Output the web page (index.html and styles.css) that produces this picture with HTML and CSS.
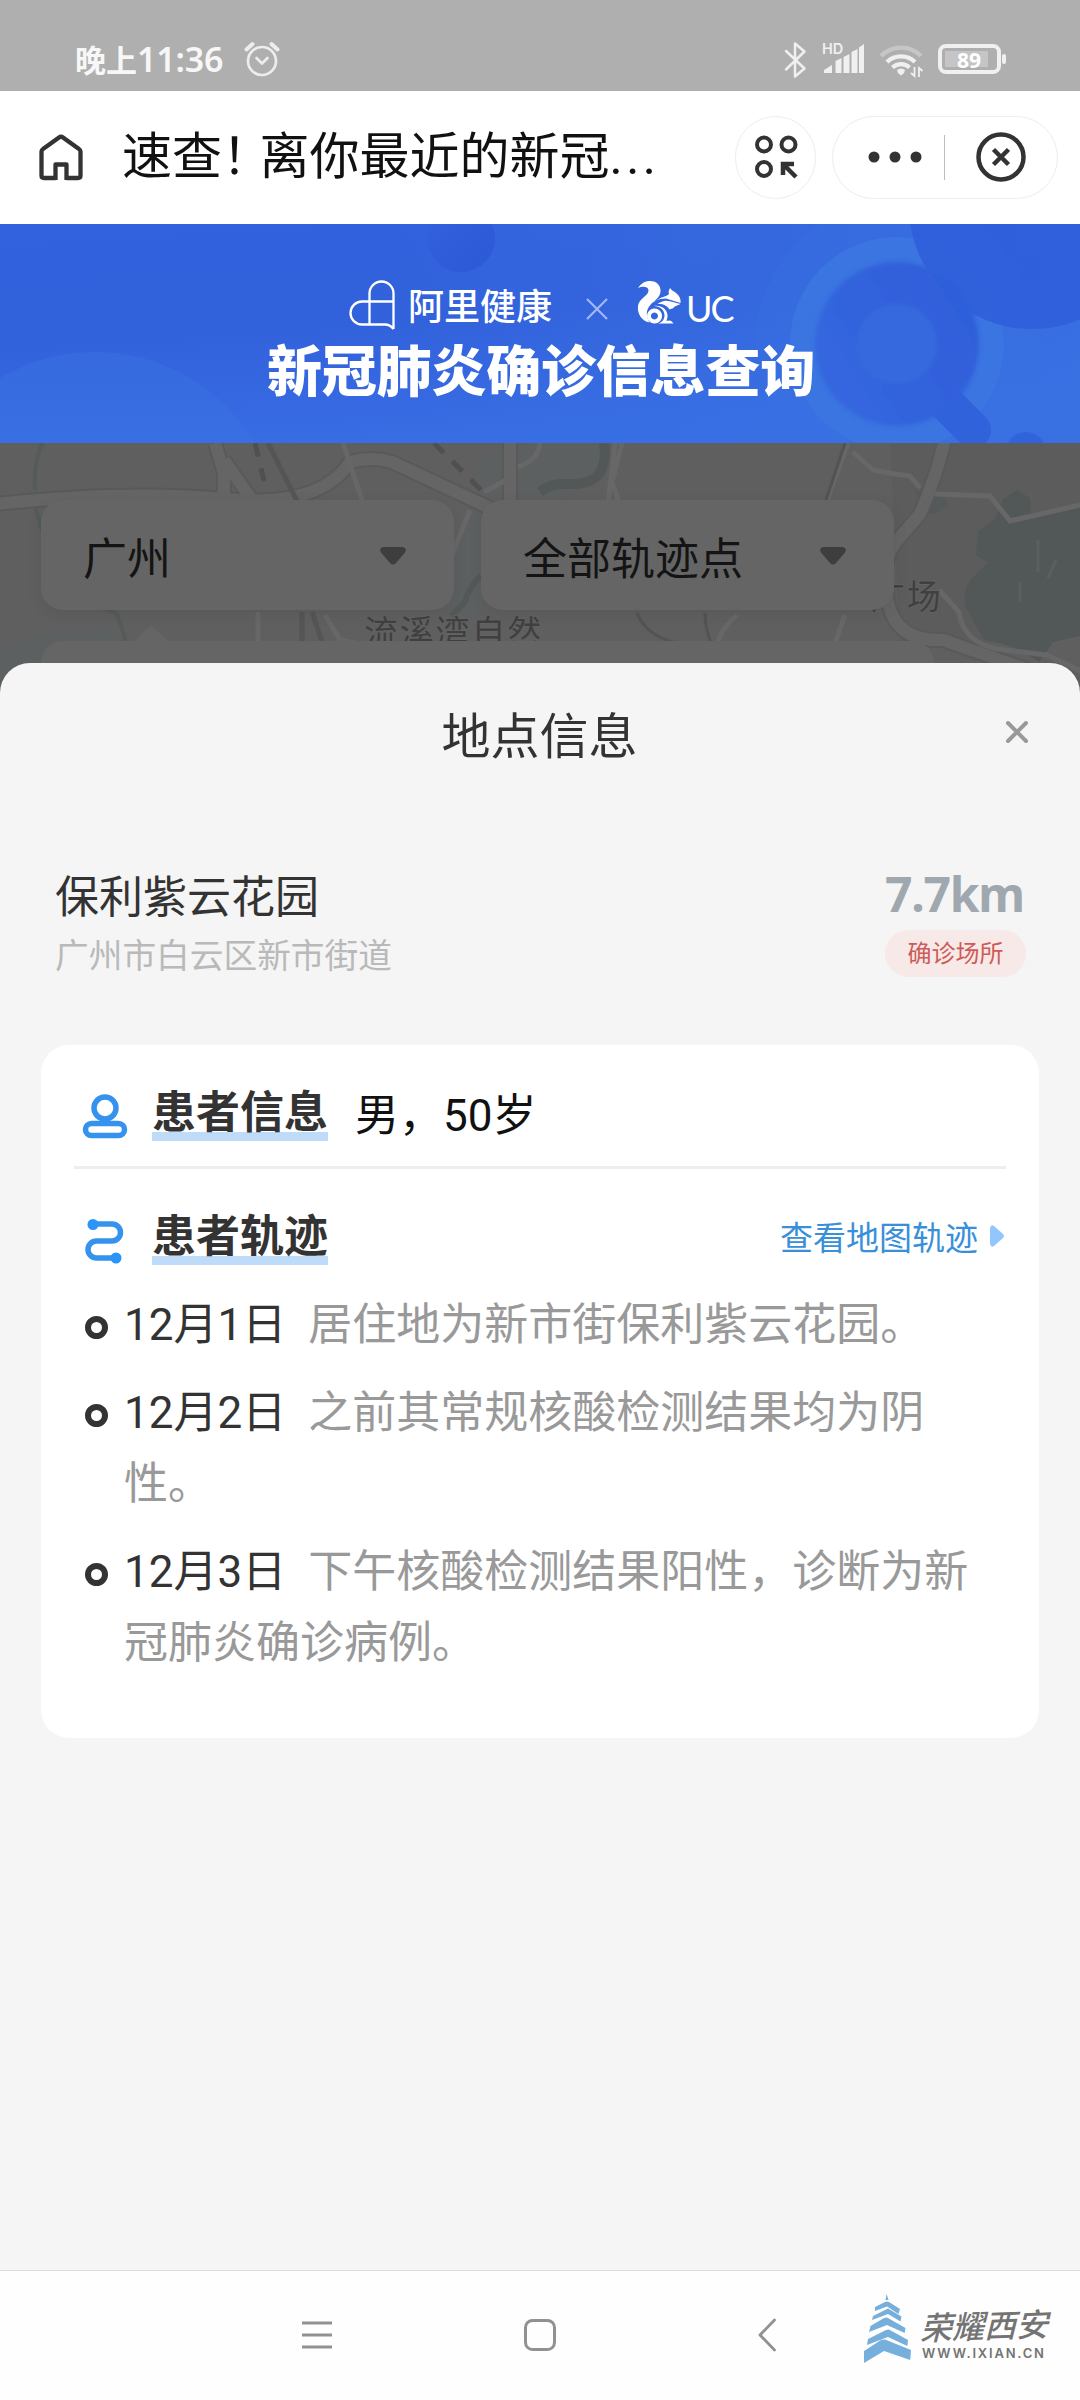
FILE: index.html
```html
<!DOCTYPE html>
<html lang="zh-CN">
<head>
<meta charset="utf-8">
<title>新冠肺炎确诊信息查询</title>
<link rel="stylesheet" href="styles.css">
</head>
<body>
<div class="status-bar">
  <div class="status-left">
    <span class="clock">晚上<b>11:36</b></span>
    <svg class="alarm" width="36" height="36" viewBox="0 0 36 36" fill="none" stroke="#ededed" stroke-width="2.7" stroke-linecap="round" stroke-linejoin="round"><circle cx="18" cy="20" r="14"/><path d="M12.500 17l5.500 5.500 5.500-5.500"/><path d="M2.500 8.500l6-5.500M33.500 8.500l-6-5.500" stroke-width="4"/></svg>
  </div>
  <svg class="status-icons" width="226" height="40" viewBox="784 39 226 40" fill="none" stroke="#f0f0f0">
    <path d="M786 51l18.500 17.500-9.500 8V43.500l9.500 8L786 69.500" stroke-width="2.500" stroke-linejoin="round" stroke-linecap="round"/>
    <text x="822" y="54" class="hd">HD</text>
    <path d="M824 73v-3l8-5v8zM835.500 73V61l6-3v15zM843.500 73V57l6-3v19zM851.500 73V52l6-3v24zM859 73V47.500l5-3.500v29z" fill="#f0f0f0" stroke="none"/>
    <g stroke-width="4.300"><path d="M881 56a28 28 0 0 1 40 0" stroke="#c6c6c6"/><path d="M887 62a20 20 0 0 1 28 0"/><path d="M892.500 67.500a12.500 12.500 0 0 1 17 0"/></g>
    <path d="M897 70q4-3 8 0l-1 3-3 2.500-3-2.500z" fill="#f0f0f0" stroke="none"/>
    <path d="M914.500 67v9l-3.500-3M919 77v-9l3.500 3" stroke-width="1.800"/>
    <rect x="940" y="46" width="59" height="26" rx="6" stroke-width="4"/>
    <rect x="945" y="51" width="43" height="16" fill="#c5c5c5" stroke="none"/>
    <rect x="1002" y="54" width="4" height="10" rx="2" fill="#f0f0f0" stroke="none"/>
    <text x="969" y="67.500" class="battery">89</text>
  </svg>
</div>

<header class="app-bar">
  <svg class="home" width="46" height="48" viewBox="0 0 46 48" fill="none" stroke="#333" stroke-width="4.300" stroke-linejoin="round"><path d="M17.500 47v-15.500h11V47M17.500 45H6q-2.500 0-2.500-2.500V18.500q0-1.500 1.500-2.500L21 4.500q2-1.500 4 0L41 16q1.500 1 1.500 2.500v24q0 2.500-2.500 2.500h-11.500"/></svg>
  <h1 class="page-title">速查<span class="bang">！</span>离你最近的新冠<span class="dots">...</span></h1>
  <div class="round-btn">
    <svg width="44" height="46" viewBox="0 0 44 46" fill="none" stroke="#333" stroke-width="4"><circle cx="10" cy="10.500" r="7"/><circle cx="34.500" cy="10.500" r="7"/><circle cx="10" cy="35" r="7"/><path d="M29 41V30h11M29.500 30.500L42 43" stroke-width="4.500"/></svg>
  </div>
  <div class="capsule">
    <svg class="more" width="54" height="12" viewBox="0 0 54 12" fill="#333"><circle cx="6" cy="6" r="5.500"/><circle cx="27" cy="6" r="5.500"/><circle cx="48" cy="6" r="5.500"/></svg>
    <span class="split"></span>
    <svg class="close" width="52" height="52" viewBox="0 0 52 52" fill="none" stroke="#333"><circle cx="26" cy="26" r="22.500" stroke-width="4.500"/><path d="M18.500 18.500l15 15M33.500 18.500l-15 15" stroke-width="4.500"/></svg>
  </div>
</header>

<section class="banner">
  <svg class="banner-art" width="1080" height="219" viewBox="0 224 1080 219">
    <defs>
      <linearGradient id="base" x1="0" y1="0" x2=".3" y2="1"><stop offset="0" stop-color="#3362de"/><stop offset=".5" stop-color="#3261dc"/><stop offset="1" stop-color="#386de4"/></linearGradient>
      <linearGradient id="right" x1="0" y1="0" x2="1" y2="0"><stop offset="0" stop-color="#3972e2" stop-opacity="0"/><stop offset="1" stop-color="#3972e2" stop-opacity=".7"/></linearGradient>
      <linearGradient id="hill" x1="0" y1="0" x2="0" y2="1"><stop offset="0" stop-color="#366ade"/><stop offset=".5" stop-color="#3a74e6"/></linearGradient>
      <linearGradient id="ring" x1="1" y1="0" x2="0" y2=".6"><stop offset="0" stop-color="#2f5dd9"/><stop offset="1" stop-color="#3466df"/></linearGradient>
      <linearGradient id="ball" x1="0" y1="0" x2="1" y2="1"><stop offset="0" stop-color="#3362dd"/><stop offset="1" stop-color="#2c59d6"/></linearGradient>
      <filter id="soft" x="-50%" y="-50%" width="200%" height="200%"><feGaussianBlur stdDeviation="2"/></filter>
    </defs>
    <rect y="224" width="1080" height="219" fill="url(#base)"/>
    <rect x="400" y="224" width="680" height="219" fill="url(#right)"/>
    <circle cx="95" cy="538" r="186" fill="url(#hill)"/>
    <circle cx="461" cy="238" r="34" fill="url(#ball)"/>
    <circle cx="897" cy="344" r="142" fill="#3970e1" opacity=".4"/>
    <circle cx="897" cy="344" r="107" fill="#3a75e1"/>
    <circle cx="1032" cy="206" r="123" fill="#2e5dda" opacity=".8"/>
    <path d="M945 402l28 28" stroke="#3062dc" stroke-width="36" stroke-linecap="round"/>
    <circle cx="897" cy="344" r="61" fill="#3569dd" stroke="url(#ring)" stroke-width="42" filter="url(#soft)"/>
    <circle cx="1026" cy="452" r="20" fill="#3164dc"/>
  </svg>
  <div class="banner-content">
    <div class="brands">
      <svg class="ali" width="47" height="52" viewBox="0 0 47 52" fill="none" stroke="#fff" stroke-width="2.300"><path d="M44.500 49V13.500a12 12 0 0 0-24 0V43.500M44.500 21.500H13a11.500 11.500 0 0 0 0 23h23q5 0 8.500 4.500"/></svg>
      <span class="brand-name">阿里健康</span>
      <svg class="times" width="22" height="22" viewBox="0 0 22 22" stroke="#a2b8f2" stroke-width="2.200"><path d="M1 1l20 20M21 1L1 21"/></svg>
      <svg class="squirrel" width="46" height="44" viewBox="0 0 46 44" fill="#fff">
        <path d="M1 8C5 2 9 1 13 1c7 0 11 5 10.500 10.500C23 17 19 19 17 22c8-6 12-5 15-8-1-2 0-4 1-6 2 3 4 3 6 5 4 3 5 7 4.500 10L29 18.500c-8 0-14 3-17.500 9-3 5-1.500 10 1 15C5 41 0 34 1 26 2 18 12 16 11.500 10 11 6 5 6 1 8z"/>
        <path d="M27 21c6-1 10 2 16.500 3-3 2-5 1-7 4l-4 1.500c-2-4-7-6-12-5.500 2-1.500 4-2.500 6.500-3z"/>
        <path d="M17 26c7-1 13 3 13.500 9 .3 3-1 5-1 6 3-1 5-1 7 2.500H21c4-1 6.500-4 6.500-8 0-6-5-9.500-10.500-9.500z"/>
        <path d="M17.500 28.500a7.500 7.500 0 1 0 .1 0zm0 4a3.500 3.500 0 1 1-.1 0z" fill-rule="evenodd"/>
      </svg>
      <span class="uc">UC</span>
    </div>
    <div class="banner-title">新冠肺炎确诊信息查询</div>
  </div>
</section>

<section class="map">
  <svg class="map-art" width="1080" height="257" viewBox="0 443 1080 257" fill="none">
    <rect y="443" width="1080" height="257" fill="#5f5f5f"/>
    <path d="M890 443h190v110l-60 90H900z" fill="#5c5c5c"/>
    <g fill="#5c6060">
      <path d="M455 540l25-80 20-17h105v25l-40 30h-30l-40 60-15 62h-30z"/>
      <path d="M0 700v-50l45-18 60-5 30 20v30z"/>
    </g>
    <path d="M43 443q-10 18-8 47M36 508q20 90 80 105 10 20 13 50" stroke="#555b5b" stroke-width="4"/>
    <path d="M540 492q10-9 25-8 26 1 34-10 8-12 5-31" stroke="#525858" stroke-width="10"/>
    <path d="M481 576q-12 10-16 26l-14 14" stroke="#535959" stroke-width="6"/>
    <path d="M966 608q-6-20 11-35l11-10-12-8 2-24 17-12 8-20 14-9 13 8 2 22 8-10V512l40-6v130l-27 6-14 20q-25-18-55-22z" fill="#525858"/>
    <path d="M914 490l30 8 4 6-12 10h-10z" fill="#545959"/>
    <path d="M1038 540v32M1020 582v20M1056 560l-8 18" stroke="#5c5f5f" stroke-width="3"/>
    <g stroke="#595959" stroke-width="16" stroke-linejoin="round">
      <path d="M-5 504Q130 490 225 499T350 462q22-6 42 0l100 47M215 443l9 30v30M224 460l28 40M510 443v60M945 440q-10 40-25 74l-24 28q-16 20-8 60t55 38l80 28 40 20"/>
    </g>
    <g stroke="#656565" stroke-width="12" stroke-linejoin="round">
      <path d="M-5 504Q130 490 225 499T350 462q22-6 42 0l100 47M215 443l9 30v30M224 460l28 40M510 443v60M945 440q-10 40-25 74l-24 28q-16 20-8 60t55 38l80 28 40 20"/>
    </g>
    <g stroke="#676767" stroke-width="5">
      <path d="M343 443l20 60M540 443q-2 18-22 24M484 492l22-12M470 510l-20 50M258 612v30M325 615l15 25 25 5M622 443l-10 40 9 24M615 443l-7 60M848 443l-22 60M853 452l20 18 22 4 15 2 10 12M935 494l55 2 20 25 70-16M939 590l20 22q4 30 38 37l50 6 38 18M737 615q-15 12-20 30M845 615l-10 28"/>
    </g>
    <path d="M255 443l9 38M434 443l48 48" stroke="#505050" stroke-width="5" stroke-dasharray="14 12"/>
    <path d="M268 443l30 60M302 612v32M312 612l10 30" stroke="#555" stroke-width="5"/>
    <path d="M637 613q10 25 45 31M705 613q0 15 6 30M845 443l-20 60" stroke="#535353" stroke-width="3"/>
    <text class="label" x="364" y="645">流溪湾自然</text>
    <text class="label" x="871" y="609">广场</text>
  </svg>
  <div class="map-ui">
    <div class="filters">
      <div class="select">广州<svg width="26" height="18" viewBox="0 0 26 18" fill="#3e3e3e"><path d="M3.500 0h19q5 1 2.500 5.500L16 16q-3 3-6 0L1 5.500Q-1.500 1 3.500 0z"/></svg></div>
      <div class="select">全部轨迹点<svg width="26" height="18" viewBox="0 0 26 18" fill="#3e3e3e"><path d="M3.500 0h19q5 1 2.500 5.500L16 16q-3 3-6 0L1 5.500Q-1.500 1 3.500 0z"/></svg></div>
    </div>
    <svg class="pointer" width="34" height="16" viewBox="0 0 34 16"><path d="M0 16L17 0l17 16z" fill="#656565"/></svg>
    <div class="hint"></div>
  </div>
</section>

<main class="sheet">
  <div class="sheet-head">
    <h2>地点信息</h2>
    <svg class="dismiss" width="24" height="24" viewBox="0 0 24 24" stroke="#999" stroke-width="4" stroke-linecap="round"><path d="M3 3l18 18M21 3L3 21"/></svg>
  </div>
  <div class="place">
    <div>
      <div class="place-name">保利紫云花园</div>
      <div class="place-address">广州市白云区新市街道</div>
    </div>
    <div class="place-side">
      <div class="distance">7.7km</div>
      <div class="tag">确诊场所</div>
    </div>
  </div>
  <div class="card">
    <div class="card-row info">
      <svg width="46" height="46" viewBox="0 0 46 46" fill="none" stroke="#3593ee" stroke-width="5.500"><circle cx="23" cy="15" r="11"/><rect x="3.500" y="30.500" width="39" height="12" rx="6"/></svg>
      <h3>患者信息</h3>
      <span class="patient">男，50岁</span>
    </div>
    <div class="card-row track">
      <svg width="46" height="46" viewBox="0 0 46 46" fill="none" stroke="#3593ee" stroke-width="5.500"><path d="M11 6h19a8.500 8.500 0 0 1 0 17H14.500a8.500 8.500 0 0 0 0 17H33"/><circle cx="11" cy="6.500" r="5.500" fill="#2b94f8" stroke="none"/><circle cx="34" cy="40" r="5.500" fill="#2b94f8" stroke="none"/></svg>
      <h3>患者轨迹</h3>
      <a class="map-link">查看地图轨迹<svg width="14" height="22" viewBox="0 0 14 22" fill="#92c7fd"><path d="M0 3q1-4 4-2l8.500 7.500q3 2.500 0 5L4 21q-3 2-4-2z"/></svg></a>
    </div>
    <ul class="timeline">
      <li><time>12月1日</time>居住地为新市街保利紫云花园。</li>
      <li><time>12月2日</time>之前其常规核酸检测结果均为阴性。</li>
      <li><time>12月3日</time>下午核酸检测结果阳性，诊断为新冠肺炎确诊病例。</li>
    </ul>
  </div>
</main>

<nav class="nav-bar">
  <svg class="nav-menu" width="32" height="34" viewBox="0 0 32 34" stroke="#919191" stroke-width="2.800"><path d="M1 5h30M1 17h30M1 29h30"/></svg>
  <svg class="nav-home" width="34" height="34" viewBox="0 0 34 34" fill="none" stroke="#919191" stroke-width="3"><rect x="2.500" y="2.500" width="29" height="29" rx="7"/></svg>
  <svg class="nav-back" width="20" height="34" viewBox="0 0 20 34" fill="none" stroke="#919191" stroke-width="2.800" stroke-linecap="round" stroke-linejoin="round"><path d="M17.500 2L3 17l14.500 15"/></svg>
  <div class="watermark">
    <svg width="48" height="70" viewBox="0 0 48 70" fill="#76afdc"><path d="M22.500 0l2 6h-3zM11 17v-4L21 8q2-1 4 0l11 7-1.500 5L23 12.500zM8 26l1-4 12-6 3-1.500 13.500 8-1 5L24 20zM5 38l1.500-6L20 24l3-.5L41.500 34l-.8 5L23 31zM3 51l1-6 18-9 3-.5L44 46l-.7 6L24 43zM0 69V57l17-11 4-.5L47 56l-.8 10L20 57z"/></svg>
    <div class="watermark-text">
      <div class="calligraphy">荣耀西安</div>
      <div class="url">WWW.IXIAN.CN</div>
    </div>
  </div>
</nav>
</body>
</html>
```
FILE: styles.css
```css
*, *::before { box-sizing: border-box; }
body {
  margin: 0;
  width: 1080px;
  height: 2400px;
  display: flex;
  flex-direction: column;
  overflow: hidden;
  background: #fff;
  color: #333;
  font-family: Roboto, "Noto Sans CJK SC", sans-serif;
}
svg { display: block; flex: none; }
h1, h2, h3, ul { margin: 0; padding: 0; font-weight: 400; }

/* Status bar */
.status-bar {
  height: 91px;
  flex: none;
  padding: 39px 70px 0 75px;
  display: flex;
  justify-content: space-between;
  background: #afafaf;
}
.status-left { display: flex; }
.clock {
  width: 169px;
  font: 700 31px/40px "Noto Sans", "Noto Sans CJK SC", sans-serif;
  color: #f7f7f7;
  white-space: nowrap;
}
.clock b { font-size: 34px; font-weight: 600; letter-spacing: -.2px; }
.alarm { margin-top: 2px; }
.hd { font: 600 14.500px Inter, sans-serif; fill: #f0f0f0; stroke: none; }
.battery { font: 700 21px "Noto Sans", sans-serif; fill: #fff; stroke: none; text-anchor: middle; }

/* App bar */
.app-bar {
  height: 133px;
  flex: none;
  display: flex;
  align-items: center;
  padding: 0 22px 1px 38px;
  background: #fff;
}
.page-title {
  width: 614px;
  margin-left: 38px;
  font-size: 50px;
  line-height: 70px;
  color: #111;
  white-space: nowrap;
}
.bang { letter-spacing: -12.500px; }
.dots { letter-spacing: 3.500px; }
.round-btn, .capsule {
  height: 83px;
  border: 1.500px solid #ededed;
  border-radius: 42px;
  display: flex;
  align-items: center;
}
.round-btn { width: 81px; flex: none; justify-content: center; }
.capsule { width: 226px; flex: none; margin-left: 16px; padding-left: 35px; }
.split { width: 1px; height: 45px; margin: 0 30px 0 22px; background: #bdbdbd; }

/* Banner */
.banner { position: relative; height: 219px; flex: none; }
.banner-art { position: absolute; inset: 0; }
.banner-content { position: relative; padding-top: 56px; color: #fff; }
.brands { height: 52px; padding-left: 349px; display: flex; }
.brand-name {
  width: 144px;
  margin-left: 12px;
  font: 500 36px/48px "Noto Sans CJK SC", sans-serif;
}
.times { margin: 18px 29px 0 34px; }
.squirrel { margin-top: 0; }
.uc { margin-left: 3px; font: 400 36px/56px Lato, sans-serif; letter-spacing: -2px; }
.banner-title {
  padding-left: 267px;
  font: 900 55px/70px "Noto Sans CJK SC", sans-serif;
  letter-spacing: -.2px;
  white-space: nowrap;
}

/* Map behind the sheet */
.map { position: relative; height: 257px; flex: none; overflow: hidden; }
.map-art { position: absolute; inset: 0; }
.label { font: 34px "Noto Sans CJK SC", sans-serif; letter-spacing: 1.800px; fill: #404040; stroke: #626262; stroke-width: 2px; paint-order: stroke; }
.map-ui { position: relative; padding: 57px 41px 0; }
.filters { display: flex; gap: 27px; }
.select {
  width: 413px;
  height: 110px;
  padding: 2px 48px 0 42px;
  border-radius: 22px;
  display: flex;
  align-items: center;
  justify-content: space-between;
  background: #656565;
  box-shadow: 0 4px 16px rgba(0, 0, 0, .07);
  color: #141414;
  font-size: 44px;
}
.pointer { margin: 15px 0 0 93px; }
.hint { width: 893px; height: 90px; border-radius: 22px; background: #656565; }

/* Bottom sheet */
.sheet {
  position: relative;
  flex: 1;
  margin-top: -37px;
  padding: 0 41px;
  border-radius: 30px 30px 0 0;
  background: #f5f5f5;
}
.sheet-head { display: flex; align-items: center; height: 144px; padding-left: 33px; }
.sheet-head h2 { flex: 1; text-align: center; font-size: 49px; margin-top: -6px; color: #333; }
.dismiss { margin: -7px 10px 0 0; }
.place {
  display: flex;
  justify-content: space-between;
  height: 238px;
  padding: 61px 13px 0 14px;
}
.place-name { font-size: 44px; line-height: 60px; }
.place-address { font-size: 33.700px; line-height: 58px; color: #b9b9b9; }
.place-side { width: 141px; }
.distance {
  font: 700 48px/60px "Noto Sans", sans-serif;
  margin-top: -4px;
  letter-spacing: -1.200px;
  color: #9fa8af;
  white-space: nowrap;
}
.tag {
  height: 47px;
  margin-top: 6px;
  border-radius: 24px;
  background: #f6e9e7;
  color: #cf5b57;
  font-size: 24px;
  line-height: 49px;
  text-align: center;
}
.card {
  height: 693px;
  padding: 0 33px;
  border-radius: 28px;
  background: #fff;
}
.card-row { display: flex; align-items: center; padding-left: 8px; }
.card-row h3 {
  margin-left: 24px;
  font-size: 44px;
  line-height: 50px;
  height: 53px;
  font-weight: 700;
  background: linear-gradient(#bedcf9, #bedcf9) 0 100% / 100% 9px no-repeat;
}
.info { height: 124px; padding-top: 20px; border-bottom: 3px solid #eee; }
.info h3 { margin-top: -2px; }
.patient { margin: -7px 0 0 27px; font-size: 44px; color: #111; }
.track { height: 112px; padding-top: 31px; }
.map-link {
  display: flex;
  align-items: center;
  gap: 12px;
  margin: -10px 2px 0 auto;
  font-size: 33px;
  color: #3a8fd9;
}
.track h3 { margin-top: -4px; }
.timeline { list-style: none; margin-top: 9px; font-size: 44px; line-height: 71px; color: #999; }
.timeline li { position: relative; padding-left: 50px; margin-bottom: 17px; }
.timeline li::before {
  content: "";
  position: absolute;
  left: 11px;
  top: 26px;
  width: 23px;
  height: 23px;
  border: 6px solid #333;
  border-radius: 50%;
}
.timeline time { margin-right: 22px; color: #333; }

/* System navigation */
.nav-bar {
  height: 130px;
  flex: none;
  display: flex;
  align-items: flex-start;
  padding: 47px 0 0 301px;
  border-top: 1.500px solid #ddd;
  background: #fefefe;
}
.nav-home { margin-left: 190px; }
.nav-back { margin-left: 200px; }
.watermark { display: flex; margin: -24px 0 0 87px; }
.watermark-text { margin-left: 8px; color: #747474; }
.calligraphy { font: italic 500 32px/40px "Noto Sans CJK SC", sans-serif; margin-top: 10px; transform: skewY(-2deg); white-space: nowrap; }
.url { font: 600 13px/14px Inter, sans-serif; letter-spacing: 1.800px; margin: 2px 0 0 2px; white-space: nowrap; }
```
